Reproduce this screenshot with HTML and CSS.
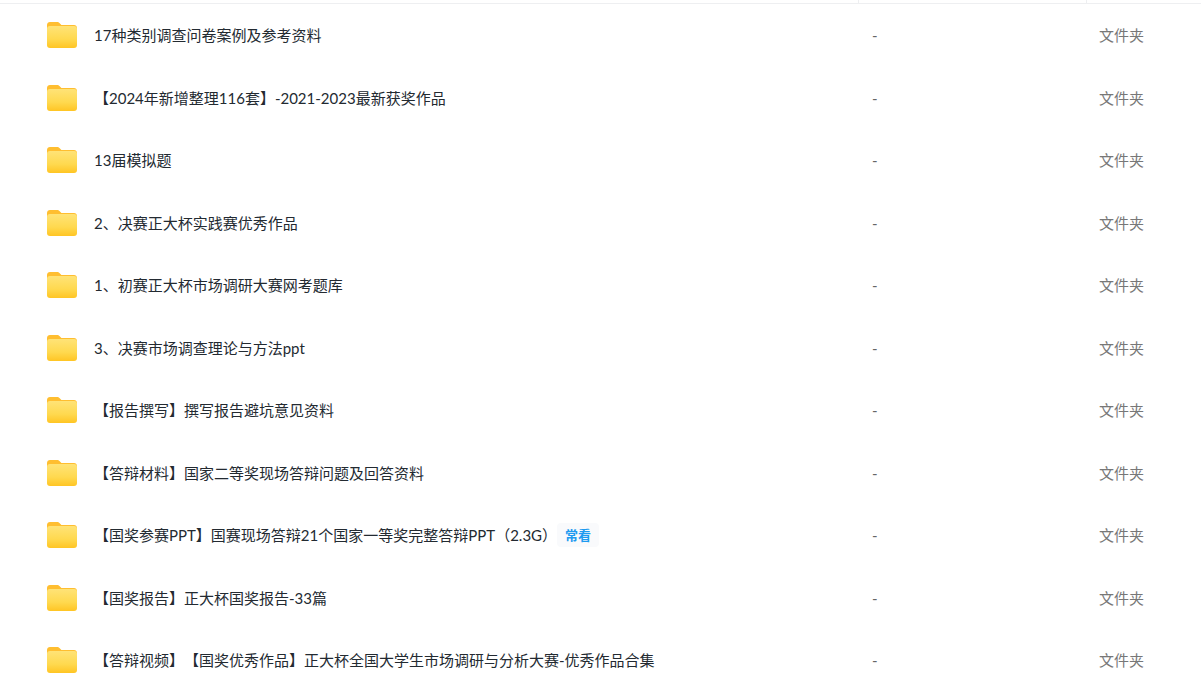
FILE: index.html
```html
<!DOCTYPE html>
<html lang="zh-CN">

<head>
  <meta charset="UTF-8" />
  <title>文件列表</title>
  <link rel="stylesheet" href="styles.css">
</head>

<body>
  <svg class="defs" width="0" height="0">
    <defs>
      <linearGradient id="folderFront" x1="0" y1="0" x2="0" y2="1">
        <stop offset="0" stop-color="#ffe377" />
        <stop offset="0.6" stop-color="#ffd94f" />
        <stop offset="1" stop-color="#ffc524" />
      </linearGradient>
      <symbol id="folder" viewBox="0 0 30 26">
        <path d="M0 3C0 1.300 1.300 0 3 0h7c1.100 0 2 .5 2.700 1.200L14.400 3H27c1.700 0 3 1.300 3 3v6H0z" fill="#ffbe30" />
        <rect x="0" y="4" width="30" height="22" rx="3" fill="url(#folderFront)" />
      </symbol>
    </defs>
  </svg>
  <div class="head">
    <div></div>
    <div></div>
    <div></div>
  </div>
  <main class="list">
    <div class="row">
      <svg class="icon"><use href="#folder" /></svg>
      <div class="name">17种类别调查问卷案例及参考资料</div>
      <div class="size">-</div>
      <div class="type">文件夹</div>
    </div>
    <div class="row">
      <svg class="icon"><use href="#folder" /></svg>
      <div class="name">【2024年新增整理116套】-2021-2023最新获奖作品</div>
      <div class="size">-</div>
      <div class="type">文件夹</div>
    </div>
    <div class="row">
      <svg class="icon"><use href="#folder" /></svg>
      <div class="name">13届模拟题</div>
      <div class="size">-</div>
      <div class="type">文件夹</div>
    </div>
    <div class="row">
      <svg class="icon"><use href="#folder" /></svg>
      <div class="name">2、决赛正大杯实践赛优秀作品</div>
      <div class="size">-</div>
      <div class="type">文件夹</div>
    </div>
    <div class="row">
      <svg class="icon"><use href="#folder" /></svg>
      <div class="name">1、初赛正大杯市场调研大赛网考题库</div>
      <div class="size">-</div>
      <div class="type">文件夹</div>
    </div>
    <div class="row">
      <svg class="icon"><use href="#folder" /></svg>
      <div class="name">3、决赛市场调查理论与方法ppt</div>
      <div class="size">-</div>
      <div class="type">文件夹</div>
    </div>
    <div class="row">
      <svg class="icon"><use href="#folder" /></svg>
      <div class="name">【报告撰写】撰写报告避坑意见资料</div>
      <div class="size">-</div>
      <div class="type">文件夹</div>
    </div>
    <div class="row">
      <svg class="icon"><use href="#folder" /></svg>
      <div class="name">【答辩材料】国家二等奖现场答辩问题及回答资料</div>
      <div class="size">-</div>
      <div class="type">文件夹</div>
    </div>
    <div class="row">
      <svg class="icon"><use href="#folder" /></svg>
      <div class="name">【国奖参赛PPT】国赛现场答辩21个国家一等奖完整答辩PPT（2.3G）<span class="tag">常看</span></div>
      <div class="size">-</div>
      <div class="type">文件夹</div>
    </div>
    <div class="row">
      <svg class="icon"><use href="#folder" /></svg>
      <div class="name">【国奖报告】正大杯国奖报告-33篇</div>
      <div class="size">-</div>
      <div class="type">文件夹</div>
    </div>
    <div class="row">
      <svg class="icon"><use href="#folder" /></svg>
      <div class="name">【答辩视频】【国奖优秀作品】正大杯全国大学生市场调研与分析大赛-优秀作品合集</div>
      <div class="size">-</div>
      <div class="type">文件夹</div>
    </div>
  </main>
</body>

</html>
```

FILE: styles.css
```css
html,
body {
  margin: 0;
  height: 100%;
  overflow: hidden;
  background-color: #fff;
}

body {
  font-family: "Lato", "Noto Sans CJK SC", sans-serif;
  font-size: 15px;
  line-height: 20px;
  color: #232a31;
  text-spacing-trim: space-all;
}

.defs {
  display: block;
  height: 0;
}

.head {
  display: grid;
  grid-template-columns: 858px 228px 1fr;
  height: 3px;
  border-bottom: 1px solid #eeeff1;
  margin-bottom: -0.25px;
}

.head div + div {
  border-left: 1px solid #eeeff1;
}

.row {
  display: grid;
  grid-template-columns: 47px 30px 1fr 227px 102px;
  align-items: center;
  height: 62.5px;
}

.icon {
  grid-column: 2;
  width: 30px;
  height: 26px;
}

.name {
  padding-left: 17px;
  white-space: nowrap;
  display: flex;
  align-items: center;
}

.size {
  color: #666;
}

.type {
  color: #777;
}

.tag {
  padding: 2px 8px;
  border-radius: 4px;
  background-color: #f9fafc;
  color: #1e9bf0;
  font-size: 13px;
  font-weight: 700;
}
```
